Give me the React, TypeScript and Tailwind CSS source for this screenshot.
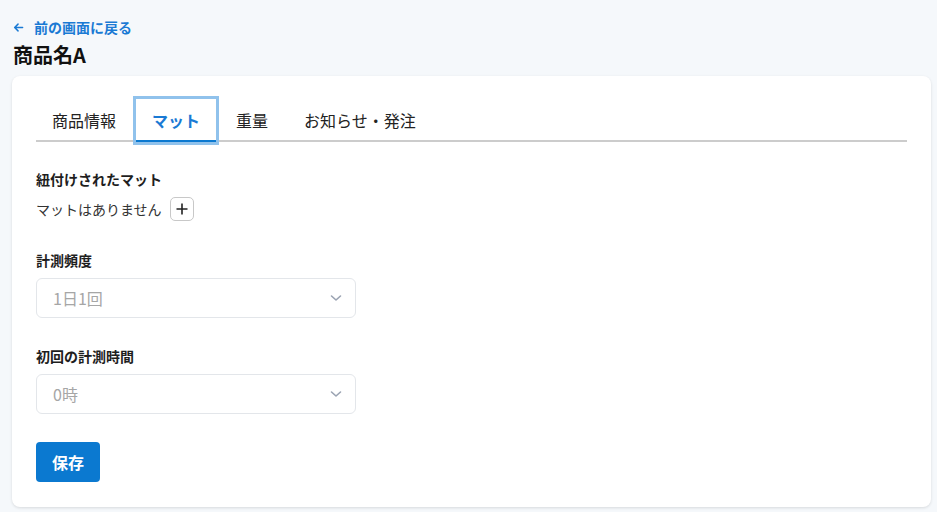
import React from "react";

const font = { fontFamily: '"Noto Sans CJK JP", "Noto Sans", sans-serif' };

function Chevron() {
  return (
    <svg width="14" height="14" viewBox="0 0 14 14" fill="none">
      <path d="M2.5 5 L7 9 L11.5 5" stroke="#9aa3b2" strokeWidth="1.6" strokeLinecap="round" strokeLinejoin="round" />
    </svg>
  );
}

function Select({ value }: { value: string }) {
  return (
    <div className="flex h-[40px] w-[320px] items-center justify-between rounded-[6px] border border-[#e3e6ea] bg-white pl-4 pr-[12px]">
      <span className="text-[16px] text-[#a6a6a6]">{value}</span>
      <Chevron />
    </div>
  );
}

export default function App() {
  const tabs = ["商品情報", "マット", "重量", "お知らせ・発注"];
  return (
    <div className="min-h-screen bg-[#f5f8fb] pt-[17px] text-[#1e1e1e]" style={font}>
      <div className="flex h-[20px] items-center pl-[13px] text-[14px] font-bold text-[#1a7ad4]">
        <svg width="11" height="11" viewBox="0 0 12 12" fill="none" className="mr-[10px]">
          <path d="M10.5 6 H2 M5.5 2.3 L1.8 6 L5.5 9.7" stroke="#1a7ad4" strokeWidth="1.6" strokeLinecap="round" strokeLinejoin="round" />
        </svg>
        <span>前の画面に戻る</span>
      </div>
      <h1 className="mt-[4px] h-[28px] pl-[13px] text-[20px] font-bold leading-[28px] text-[#111]">商品名A</h1>
      <div className="ml-3 mr-[6px] mt-[7px] rounded-[8px] bg-white px-6 pb-[25px] pt-[23px] shadow-[0_1px_3px_rgba(0,0,0,0.12)]">
        <div className="flex gap-1 border-b-2 border-[#cccccc]">
          {tabs.map((t) =>
            t === "マット" ? (
              <div
                key={t}
                className="-mb-[2px] flex h-[43px] items-center border-b-2 border-[#0b79d0] px-4 text-[16px] font-bold text-[#1a7ad4] outline outline-[3px] outline-[#90c2ec]"
              >
                {t}
              </div>
            ) : (
              <div key={t} className="flex h-[41px] items-center px-4 text-[16px] text-[#222]">
                {t}
              </div>
            )
          )}
        </div>

        <div className="mt-[27px] text-[14px] font-bold leading-[20px]">紐付けされたマット</div>
        <div className="mt-2 flex items-center gap-[8px]">
          <span className="text-[14px] text-[#333]">マットはありません</span>
          <button className="flex h-[24px] w-[24px] items-center justify-center rounded-[5px] border border-[#c8c8c8] bg-white">
            <svg width="12" height="12" viewBox="0 0 12 12">
              <path d="M6 0.5 V11.5 M0.5 6 H11.5" stroke="#222" strokeWidth="1.6" />
            </svg>
          </button>
        </div>

        <div className="mt-[29px] text-[14px] font-bold leading-[20px]">計測頻度</div>
        <div className="mt-2">
          <Select value="1日1回" />
        </div>

        <div className="mt-[28px] text-[14px] font-bold leading-[20px]">初回の計測時間</div>
        <div className="mt-2">
          <Select value="0時" />
        </div>

        <button className="mt-[28px] flex h-[40px] w-[64px] items-center justify-center rounded-[4px] bg-[#0b79d0] text-[16px] font-bold text-white">
          保存
        </button>
      </div>
    </div>
  );
}
